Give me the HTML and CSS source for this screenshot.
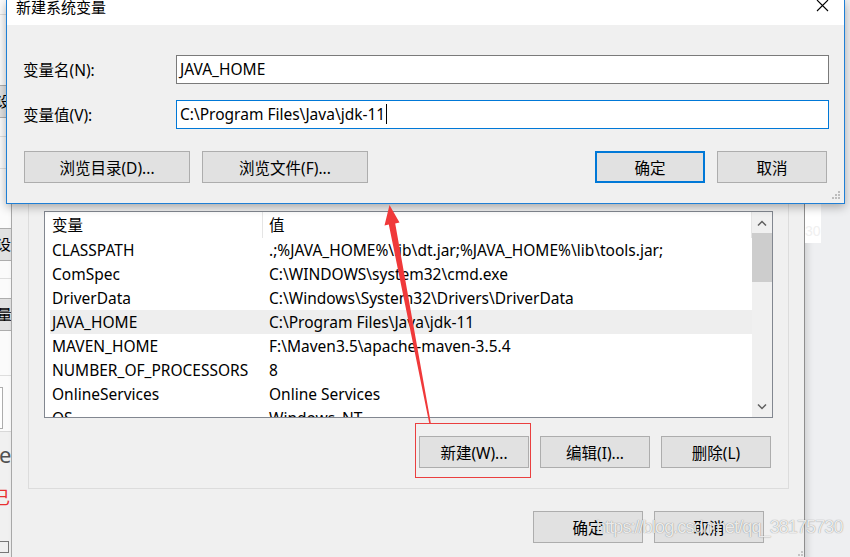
FILE: index.html
```html
<!DOCTYPE html>
<html lang="zh-CN">
<head>
    <meta charset="UTF-8">
    <title>新建系统变量</title>
    <link rel="stylesheet" href="styles.css">
</head>
<body>
    <!-- System properties window, only its edge shows -->
    <div class="side-window">
        <div class="side-line first"></div>
        <div class="side-btn b1"><span class="cut">设置</span></div>
        <div class="side-line l2"></div>
        <div class="side-line l3"></div>
        <div class="side-btn b2"><span class="cut">设置</span></div>
        <div class="side-line l4"></div>
        <div class="side-btn b3"><span class="cut-small">量</span></div>
        <div class="side-line l5"></div>
        <div class="side-box"></div>
        <div class="side-lower">
            <span class="side-e">e</span>
            <span class="side-red">已</span>
            <span class="side-check"></span>
        </div>
    </div>

    <!-- Environment variables window -->
    <div class="env-window">
        <div class="group">
            <div class="list">
                <div class="list-main">
                    <div class="list-head">
                        <div class="head-name">变量</div>
                        <div class="head-value">值</div>
                    </div>
                    <div class="list-row"><div class="col-name">CLASSPATH</div><div class="col-value">.;%JAVA_HOME%\lib\dt.jar;%JAVA_HOME%\lib\tools.jar;</div></div>
                    <div class="list-row"><div class="col-name">ComSpec</div><div class="col-value">C:\WINDOWS\system32\cmd.exe</div></div>
                    <div class="list-row"><div class="col-name">DriverData</div><div class="col-value">C:\Windows\System32\Drivers\DriverData</div></div>
                    <div class="list-row selected"><div class="col-name">JAVA_HOME</div><div class="col-value">C:\Program Files\Java\jdk-11</div></div>
                    <div class="list-row"><div class="col-name">MAVEN_HOME</div><div class="col-value">F:\Maven3.5\apache-maven-3.5.4</div></div>
                    <div class="list-row"><div class="col-name">NUMBER_OF_PROCESSORS</div><div class="col-value">8</div></div>
                    <div class="list-row"><div class="col-name">OnlineServices</div><div class="col-value">Online Services</div></div>
                    <div class="list-row"><div class="col-name">OS</div><div class="col-value">Windows_NT</div></div>
                </div>
                <div class="scrollbar">
                    <div class="scroll-btn">
                        <svg width="10" height="6" viewBox="0 0 10 6"><polyline points="1,5.5 5,1.5 9,5.5" fill="none" stroke="#606060" stroke-width="1.5"/></svg>
                    </div>
                    <div class="scroll-track"><div class="scroll-thumb"></div></div>
                    <div class="scroll-btn">
                        <svg width="10" height="6" viewBox="0 0 10 6"><polyline points="1,0.5 5,4.5 9,0.5" fill="none" stroke="#606060" stroke-width="1.5"/></svg>
                    </div>
                </div>
            </div>
            <div class="btn-row">
                <button class="btn">新建(W)...</button>
                <button class="btn">编辑(I)...</button>
                <button class="btn">删除(L)</button>
            </div>
        </div>
        <div class="btn-row bottom">
            <button class="btn">确定</button>
            <button class="btn">取消</button>
        </div>
        <svg class="grip" width="7" height="7" viewBox="0 0 7 7">
            <rect x="5" y="1" width="2" height="2" fill="#c4c4c4"/>
            <rect x="2" y="4" width="2" height="2" fill="#c4c4c4"/>
            <rect x="5" y="4" width="2" height="2" fill="#c4c4c4"/>
        </svg>
    </div>

    <div class="ghost-patch">30</div>
    <div class="watermark">https://blog.csdn.net/qq_38175730</div>

    <!-- New system variable dialog -->
    <div class="dialog">
        <div class="dialog-title">
            <span class="title-text">新建系统变量</span>
            <svg class="close" width="13" height="12" viewBox="0 0 13 12">
                <path d="M1 0 L12 11 M12 0 L1 11" stroke="#000" stroke-width="1.1" fill="none"/>
            </svg>
        </div>
        <div class="dialog-body">
            <div class="field">
                <label>变量名(N):</label>
                <div class="input">JAVA_HOME</div>
            </div>
            <div class="field">
                <label>变量值(V):</label>
                <div class="input focused">C:\Program Files\Java\jdk-11<span class="caret"></span></div>
            </div>
            <div class="dialog-buttons">
                <button class="btn wide">浏览目录(D)...</button>
                <button class="btn wide">浏览文件(F)...</button>
                <div class="spacer"></div>
                <button class="btn default">确定</button>
                <button class="btn">取消</button>
            </div>
        </div>
        <svg class="dialog-grip" width="10" height="10" viewBox="0 0 10 10">
            <rect x="7" y="1" width="2" height="2" fill="#bdbdbd"/>
            <rect x="4" y="4" width="2" height="2" fill="#bdbdbd"/>
            <rect x="7" y="4" width="2" height="2" fill="#bdbdbd"/>
            <rect x="1" y="7" width="2" height="2" fill="#bdbdbd"/>
            <rect x="4" y="7" width="2" height="2" fill="#bdbdbd"/>
            <rect x="7" y="7" width="2" height="2" fill="#bdbdbd"/>
        </svg>
    </div>

    <!-- Red annotation -->
    <svg class="annotation" width="850" height="557" viewBox="0 0 850 557">
        <polygon points="389.5,205 399.5,222.6 395.2,223.4 430.8,423 429.2,423 388.8,224.6 384.5,225.4" fill="#f0393a"/>
        <rect x="415.5" y="423.5" width="115" height="54" fill="none" stroke="#ea3f3f" stroke-width="1"/>
    </svg>
</body>
</html>
```

FILE: styles.css
```css
/* Page */
* {
    box-sizing: border-box;
}
body {
    margin: 0;
    width: 850px;
    height: 557px;
    overflow: hidden;
    position: relative;
    background: #eeeff1;
    font-family: "Noto Sans", "Noto Sans CJK SC", sans-serif;
    font-size: 15.5px;
    color: #000;
}
button {
    font: inherit;
    color: inherit;
}

/* Left strip (window behind) */
.side-window {
    position: absolute;
    left: 0;
    top: 0;
    width: 11px;
    height: 557px;
    overflow: hidden;
    background: #fbfbfb;
    display: flex;
    flex-direction: column;
}
.side-line {
    height: 1px;
    background: #dedede;
    flex-shrink: 0;
}
.side-line.first { margin-top: 14px; }
.side-line.l2 { margin-top: 18px; }
.side-line.l3 { margin-top: 31px; }
.side-line.l4 { margin-top: 17px; }
.side-line.l5 { margin-top: 44px; }
.side-btn {
    height: 33px;
    flex-shrink: 0;
    background: #e1e1e1;
    border-top: 1px solid #adadad;
    border-bottom: 1px solid #adadad;
    overflow: hidden;
    white-space: nowrap;
    font-size: 15px;
    line-height: 31px;
}
.side-btn.b1 { margin-top: 70px; }
.side-btn.b2 { margin-top: 59px; }
.side-btn.b3 { margin-top: 19px; }
.cut {
    margin-left: -4px;
}
.cut-small {
    margin-left: -3px;
}
.side-box {
    margin-top: 11px;
    width: 3px;
    height: 42px;
    flex-shrink: 0;
    background: #fff;
    border: 1px solid #adadad;
    border-left: none;
}
.side-lower {
    flex: 1;
    margin-top: 2px;
    background: #f0f0f0;
    border-top: 1px solid #d8d8d8;
    display: flex;
    flex-direction: column;
    overflow: hidden;
}
.side-e {
    margin-top: 9px;
    font-size: 22px;
    line-height: 26px;
    color: #505050;
    margin-left: -1px;
}
.side-red {
    margin-top: 19px;
    font-size: 18px;
    line-height: 22px;
    color: #e83030;
    margin-left: -8px;
}
.side-check {
    margin-top: 33px;
    width: 10px;
    height: 12px;
    border: 1px solid #777;
    margin-left: -1px;
}

/* Environment variables window */
.env-window {
    position: absolute;
    left: 11px;
    top: 0;
    width: 794px;
    height: 570px;
    background: #f0f0f0;
    border-left: 1px solid #a8a8a8;
    border-right: 1px solid #8e8e8e;
    box-shadow: 3px 0 6px rgba(0, 0, 0, 0.12);
    padding-top: 150px;
}
.group {
    margin-left: 16px;
    width: 761px;
    border: 1px solid #dcdcdc;
    padding: 60px 15px 20px 15px;
}
.list {
    width: 729px;
    height: 207px;
    background: #fff;
    border: 1px solid #828790;
    display: flex;
    overflow: hidden;
}
.list-main {
    flex: 1;
    overflow: hidden;
}
.list-head {
    display: flex;
    height: 26px;
    line-height: 26px;
}
.head-name {
    width: 218px;
    padding-left: 7px;
    border-right: 1px solid #e5e5e5;
}
.head-value {
    flex: 1;
    padding-left: 6px;
    border-right: 1px solid #e5e5e5;
}
.list-row {
    display: flex;
    margin-left: 5px;
    height: 24px;
    line-height: 24px;
    white-space: nowrap;
}
.list-row.selected {
    background: #eeeeee;
}
.col-name {
    width: 212px;
    padding-left: 2px;
}
.col-value {
    flex: 1;
    padding-left: 7px;
    overflow: hidden;
}

/* Scrollbar */
.scrollbar {
    width: 20px;
    background: #f0f0f0;
    display: flex;
    flex-direction: column;
}
.scroll-btn {
    height: 21px;
    display: flex;
    align-items: center;
    justify-content: center;
}
.scroll-track {
    flex: 1;
}
.scroll-thumb {
    height: 49px;
    background: #cdcdcd;
}

/* Buttons */
.btn-row {
    display: flex;
    justify-content: flex-end;
    gap: 11px;
    margin-top: 18px;
    padding-right: 2px;
}
.btn-row.bottom {
    margin-top: 22px;
    padding-right: 40px;
}
.btn {
    width: 110px;
    height: 32px;
    padding: 0;
    background: #e1e1e1;
    border: 1px solid #adadad;
    border-radius: 0;
}
.btn.wide {
    width: 166px;
}
.btn.default {
    border: 2px solid #0078d7;
}
.grip {
    position: absolute;
    right: 1px;
    top: 550px;
}

/* Leftovers on the right */
.ghost-patch {
    position: absolute;
    left: 805px;
    top: 202px;
    width: 16px;
    height: 41px;
    background: #fff;
    color: #f0f0f0;
    font-family: "Liberation Sans", sans-serif;
    font-size: 14px;
    padding-top: 22px;
    line-height: 14px;
    overflow: hidden;
}
.watermark {
    position: absolute;
    left: 596px;
    top: 517px;
    font-family: "Liberation Sans", Arial, sans-serif;
    font-size: 18px;
    letter-spacing: -0.9px;
    color: rgba(250, 250, 250, 0.9);
    text-shadow: 0 0 1px rgba(0, 0, 0, 0.5);
    white-space: nowrap;
}

/* New system variable dialog */
.dialog {
    position: absolute;
    left: 6px;
    top: 0;
    width: 839px;
    background: #f0f0f0;
    border: 1px solid #1f7fd5;
    border-top: none;
    box-shadow: 0 3px 9px rgba(0, 0, 0, 0.3);
}
.dialog-title {
    height: 25px;
    background: #fff;
    display: flex;
    align-items: flex-start;
    padding-left: 9px;
}
.title-text {
    font-size: 15px;
    line-height: 14px;
}
.close {
    margin-left: auto;
    margin-right: 15px;
    margin-top: 0;
}
.dialog-body {
    padding: 30px 15px 20px 16px;
}
.field {
    display: flex;
    align-items: center;
    height: 29px;
}
.field + .field {
    margin-top: 16px;
}
.field label {
    width: 153px;
}
.input {
    flex: 1;
    height: 29px;
    line-height: 27px;
    padding-left: 3px;
    background: #fff;
    border: 1px solid #7a7a7a;
    white-space: nowrap;
}
.input.focused {
    border-color: #0078d7;
}
.caret {
    display: inline-block;
    width: 1px;
    height: 20px;
    margin-left: 1px;
    background: #000;
    vertical-align: -4px;
}
.dialog-buttons {
    display: flex;
    gap: 12px;
    margin-top: 22px;
    padding-left: 1px;
    padding-right: 2px;
}
.spacer {
    flex: 1;
}
.dialog-grip {
    position: absolute;
    right: 3px;
    bottom: 3px;
}

/* Annotation on top */
.annotation {
    position: absolute;
    left: 0;
    top: 0;
    pointer-events: none;
}
```
